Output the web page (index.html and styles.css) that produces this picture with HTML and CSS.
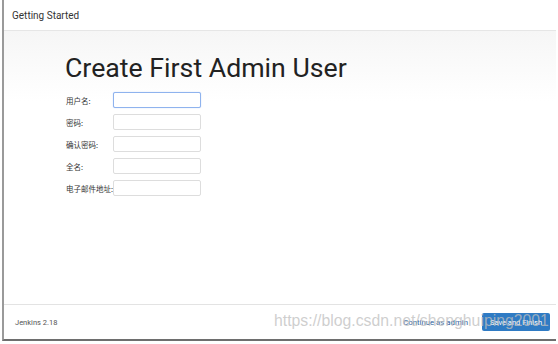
FILE: index.html
```html
<!DOCTYPE html>
<html>
<head>
<meta charset="utf-8">
<link rel="stylesheet" href="styles.css">
</head>
<body>
<div class="dialog">
  <header class="head">Getting Started</header>
  <main class="content">
    <h1 class="title">Create First Admin User</h1>
    <form class="form">
      <label class="row"><span class="lbl">用户名:</span><input class="inp focus" type="text"></label>
      <label class="row"><span class="lbl">密码:</span><input class="inp" type="password"></label>
      <label class="row"><span class="lbl">确认密码:</span><input class="inp" type="password"></label>
      <label class="row"><span class="lbl">全名:</span><input class="inp" type="text"></label>
      <label class="row"><span class="lbl">电子邮件地址:</span><input class="inp" type="text"></label>
    </form>
  </main>
  <footer class="foot">
    <span class="ver">Jenkins 2.18</span>
    <div class="actions">
      <a class="link">Continue as admin</a>
      <button class="btn" type="button">Save and Finish</button>
    </div>
  </footer>
  <div class="watermark">https://blog.csdn.net/shenghuiping2001</div>
</div>
</body>
</html>
```
FILE: styles.css
```css
* { box-sizing: border-box; }
html, body { margin: 0; padding: 0; background: #fff; }
body { width: 558px; height: 344px; overflow: hidden; font-family: Roboto, "Noto Sans CJK SC", sans-serif; }
.dialog {
  position: relative;
  margin-left: 2px;
  width: 554px;
  height: 341px;
  border-left: 2px solid #9a9a9a;
  border-bottom: 2px solid #6e6e6e;
  display: flex;
  flex-direction: column;
  background: #fff;
}
.head {
  height: 31px;
  flex: none;
  border-bottom: 1px solid #e6e6e6;
  padding-left: 8px;
  display: flex;
  align-items: center;
  font-size: 10px;
  color: #333;
}
.content {
  flex: 1;
  background: linear-gradient(#f6f6f6, #ffffff 70px);
  padding: 17px 0 0 62px;
}
.title {
  margin: 0 0 4px -1px;
  font-weight: 400;
  font-size: 26.7px;
  line-height: 40px;
  color: #222;
}
.form { display: flex; flex-direction: column; gap: 6px; }
.row { display: flex; align-items: center; height: 16px; }
.lbl {
  flex: none;
  width: 47px;
  white-space: nowrap;
  font-family: "Noto Sans CJK SC", sans-serif;
  font-size: 7.5px;
  color: #333;
}
.inp {
  width: 88px;
  height: 16px;
  border: 1px solid #ddd;
  border-radius: 2px;
  background: #fff;
  padding: 0;
  outline: none;
}
.inp.focus { border-color: #8fb3ee; box-shadow: 0 0 1px #9fc0f5; }
.foot {
  height: 35px;
  flex: none;
  border-top: 1px solid #e3e3e3;
  display: flex;
  align-items: center;
  justify-content: space-between;
  padding: 0 6px 0 11px;
}
.ver { font-size: 7.5px; color: #555; }
.actions { display: flex; align-items: center; gap: 14px; }
.link { font-size: 7.8px; color: #2a5ea0; }
.btn {
  width: 68px;
  height: 18px;
  border: none;
  border-radius: 2px;
  background: #2f7bc4;
  color: #fff;
  font-family: Roboto, sans-serif;
  font-size: 7.5px;
  padding: 0;
}
.watermark {
  position: absolute;
  left: 270px;
  top: 312px;
  font-family: "Liberation Sans", Arial, sans-serif;
  font-size: 15.8px;
  color: rgba(190, 190, 190, 0.75);
  white-space: nowrap;
  pointer-events: none;
}
```
